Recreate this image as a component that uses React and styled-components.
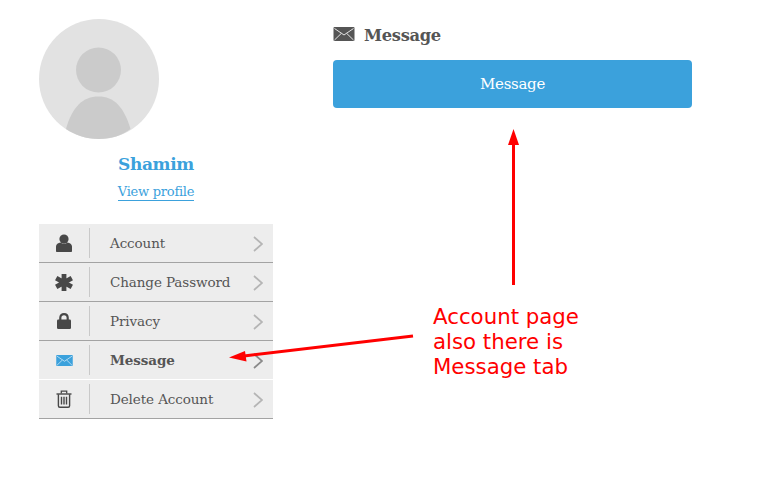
import React from "react";
import styled, { createGlobalStyle } from "styled-components";

const GlobalStyle = createGlobalStyle`
  html, body {
    margin: 0;
    padding: 0;
    background: #fff;
    font-family: "DejaVu Serif", "Liberation Serif", serif;
  }
`;

const Page = styled.div`
  position: relative;
  width: 768px;
  height: 481px;
  overflow: hidden;
  display: flex;
  padding: 19px 0 0 39px;
  box-sizing: border-box;
  gap: 60px;
`;

const Sidebar = styled.div`
  width: 234px;
  display: flex;
  flex-direction: column;
`;

const Profile = styled.div`
  display: flex;
  flex-direction: column;
  align-items: center;
`;

const AvatarWrap = styled.div`
  align-self: flex-start;
  width: 120px;
  height: 120px;
`;

const Name = styled.div`
  margin-top: 15px;
  font-size: 17px;
  line-height: 20px;
  font-weight: 700;
  color: #3ba1dc;
  letter-spacing: -0.35px;
`;

const ViewLink = styled.a`
  margin-top: 9px;
  margin-bottom: 23px;
  font-size: 13px;
  line-height: 17px;
  color: #3ba1dc;
  border-bottom: 1px solid #3ba1dc;
  letter-spacing: -0.25px;
`;

const Menu = styled.div`
  display: flex;
  flex-direction: column;
`;

const Row = styled.div`
  height: 38px;
  display: flex;
  align-items: center;
  background: #ededed;
  border-bottom: 1px solid ${({ $active }) => ($active ? "#fff" : "#a3a3a3")};
  color: #555;
`;

const IconCell = styled.div`
  width: 51px;
  height: 30px;
  box-sizing: border-box;
  border-right: 1px solid #c9c9c9;
  display: flex;
  align-items: center;
  justify-content: center;
`;

const Label = styled.span`
  flex: 1;
  margin-left: 20px;
  font-size: 13.5px;
  letter-spacing: -0.1px;
  font-weight: ${({ $active }) => ($active ? 700 : 400)};
`;

const Chevron = styled.svg`
  width: 10px;
  height: 16px;
  margin: 2px 10px 0 0;
  fill: none;
  stroke: ${({ $active }) => ($active ? "#8a8a8a" : "#b5b5b5")};
  stroke-width: 1.7;
`;

const Main = styled.div`
  width: 359px;
  display: flex;
  flex-direction: column;
`;

const Heading = styled.div`
  display: flex;
  align-items: center;
  gap: 9px;
  height: 32px;
  font-size: 16.3px;
  font-weight: 700;
  color: #555;
  letter-spacing: -0.3px;

  svg {
    margin-bottom: 2px;
  }
`;

const SendButton = styled.button`
  margin-top: 9px;
  height: 48px;
  width: 100%;
  border: 0;
  border-radius: 4px;
  background: #3ba1dc;
  color: #fff;
  font-family: inherit;
  font-size: 15px;
  letter-spacing: -0.3px;
`;

const Arrows = styled.svg`
  position: absolute;
  left: 0;
  top: 0;
  width: 768px;
  height: 481px;
  pointer-events: none;
`;

const Note = styled.div`
  position: absolute;
  left: 433px;
  top: 304px;
  font-family: "DejaVu Sans", sans-serif;
  font-size: 21.3px;
  line-height: 25px;
  color: #f00;
`;

const Envelope = ({ color, fold, width, height }) => (
  <svg width={width} height={height} viewBox="0 0 21 14">
    <rect width="21" height="14" rx="1" fill={color} />
    <path d="M1 1.5 L10.5 8 L20 1.5 M1 13 L7.8 6.4 M20 13 L13.2 6.4" fill="none" stroke={fold} strokeWidth="1" />
  </svg>
);

const PersonIcon = () => (
  <svg width="16" height="18" viewBox="0 0 16 18" fill="#484848">
    <circle cx="8" cy="5" r="4.6" />
    <path d="M0 17V12.5C0 10 2.2 8.7 4.5 8.4C6.5 10 9.5 10 11.5 8.4C13.8 8.7 16 10 16 12.5V17C16 17.6 15.6 18 15 18H1C0.4 18 0 17.6 0 17Z" />
  </svg>
);

const AsteriskIcon = () => (
  <svg width="18" height="17" viewBox="0 0 18 17" fill="none" stroke="#484848" strokeWidth="4.8">
    <path d="M9 0V17M1.2 4.2L16.8 12.8M16.8 4.2L1.2 12.8" />
  </svg>
);

const LockIcon = () => (
  <svg width="14" height="16" viewBox="0 0 14 16">
    <path d="M3.3 7V4.8C3.3 2.5 4.8 1.2 7 1.2C9.2 1.2 10.7 2.5 10.7 4.8V7" fill="none" stroke="#484848" strokeWidth="2.2" />
    <rect y="6.5" width="14" height="9.5" rx="1.2" fill="#484848" />
  </svg>
);

const TrashIcon = () => (
  <svg width="16" height="18" viewBox="0 0 16 18" fill="none" stroke="#484848">
    <path d="M0.5 4H15.5" strokeWidth="1.4" />
    <path d="M5.3 3.6V1.2H10.7V3.6" strokeWidth="1.3" />
    <path d="M2.4 4.2V15.8C2.4 16.8 3 17.3 3.8 17.3H12.2C13 17.3 13.6 16.8 13.6 15.8V4.2" strokeWidth="1.4" />
    <path d="M5.5 6.8V14.6M8 6.8V14.6M10.5 6.8V14.6" strokeWidth="1.4" />
  </svg>
);

const items = [
  { label: "Account", icon: <PersonIcon /> },
  { label: "Change Password", icon: <AsteriskIcon /> },
  { label: "Privacy", icon: <LockIcon /> },
  { label: "Message", icon: <Envelope color="#3ba1dc" fold="#cfe8f7" width={17} height={11} />, active: true },
  { label: "Delete Account", icon: <TrashIcon /> },
];

export default function App() {
  return (
    <Page>
      <GlobalStyle />
      <Sidebar>
        <Profile>
          <AvatarWrap>
            <svg width="120" height="120" viewBox="0 0 120 120">
              <circle cx="60" cy="60" r="60" fill="#e2e2e2" />
              <circle cx="59.5" cy="51" r="22.5" fill="#cbcbcb" />
              <path d="M27 110C33 88 44 77.5 59.5 77.5C75 77.5 85 88 91.5 110C83 116.5 72 120 60 120C47 120 36 116 27 110Z" fill="#cbcbcb" />
            </svg>
          </AvatarWrap>
          <Name>Shamim</Name>
          <ViewLink>View profile</ViewLink>
        </Profile>
        <Menu>
          {items.map((it) => (
            <Row key={it.label} $active={it.active}>
              <IconCell>{it.icon}</IconCell>
              <Label $active={it.active}>{it.label}</Label>
              <Chevron viewBox="0 0 10 16" $active={it.active}>
                <path d="M1 1L9 8L1 15" />
              </Chevron>
            </Row>
          ))}
        </Menu>
      </Sidebar>
      <Main>
        <Heading>
          <Envelope color="#555" fold="#e4e4e4" width={22} height={14} />
          Message
        </Heading>
        <SendButton>Message</SendButton>
      </Main>
      <Arrows viewBox="0 0 768 481">
        <path d="M513.5 285V140" stroke="#f00" strokeWidth="3" fill="none" />
        <path d="M513.5 129L519 145H508Z" fill="#f00" />
        <path d="M413 336L244 356" stroke="#f00" strokeWidth="3" fill="none" />
        <path d="M229 357.5L245 351L246.5 361.5Z" fill="#f00" />
      </Arrows>
      <Note>
        Account page
        <br />
        also there is
        <br />
        Message tab
      </Note>
    </Page>
  );
}
